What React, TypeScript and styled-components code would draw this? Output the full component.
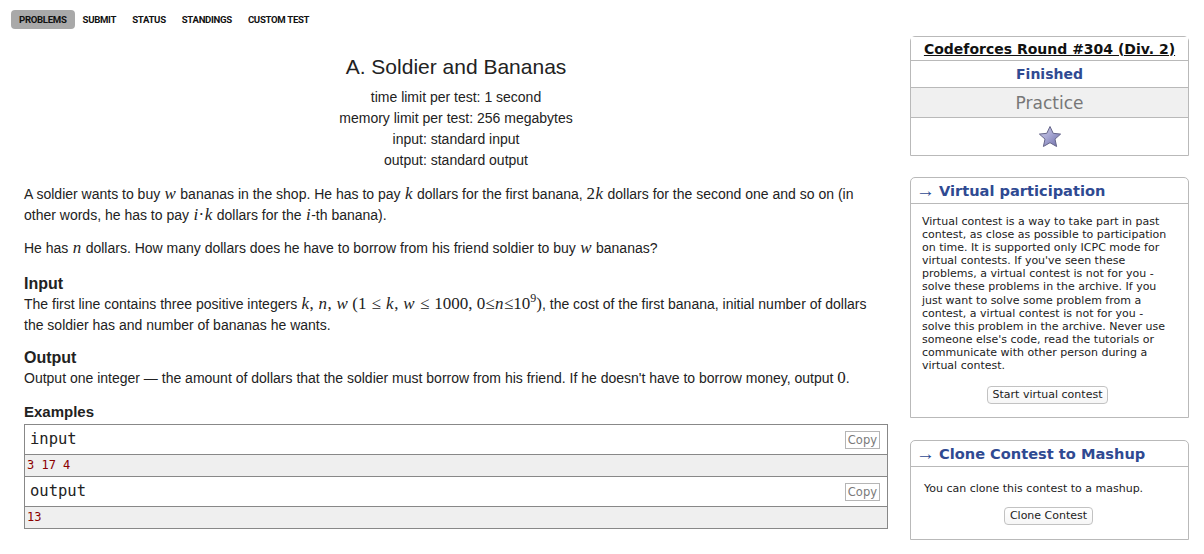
import React from 'react';
import styled, { createGlobalStyle } from 'styled-components';

const Global = createGlobalStyle`
  html, body { margin: 0; padding: 0; background: #fff; }
  body { font-family: "Liberation Sans", Arial, sans-serif; color: #222; }
`;

const Page = styled.div`
  width: 1204px;
  height: 554px;
  overflow: hidden;
  padding-top: 10px;
  box-sizing: border-box;
`;

const Nav = styled.nav`
  display: flex;
  align-items: center;
  margin-left: 11px;
  height: 19px;
`;

const NavItem = styled.a<{ $active?: boolean }>`
  font-family: Roboto, "DejaVu Sans", sans-serif;
  font-weight: bold;
  font-size: 9.6px;
  letter-spacing: -0.3px;
  color: #111;
  padding: 0 8px;
  height: 19px;
  line-height: 19px;
  border-radius: 4px;
  background: ${p => (p.$active ? '#a9a9a9' : 'transparent')};
`;

const Body = styled.div`
  display: flex;
  align-items: flex-start;
  gap: 20px;
  padding-left: 24px;
  margin-top: 7px;
`;

const Main = styled.main`
  width: 866px;
  font-size: 14px;
  line-height: 21px;
  color: #222;
`;

const Title = styled.h1`
  margin: 18px 0 0;
  font-size: 21px;
  line-height: 25px;
  font-weight: normal;
  text-align: center;
  color: #222;
  padding-right: 2px;
`;

const Limits = styled.div`
  margin-top: 8px;
  text-align: center;
  padding-right: 2px;
`;

const Para = styled.p<{ $gap?: number }>`
  margin: ${p => p.$gap ?? 13}px 0 0;
  line-height: 21px;
`;

const SectionTitle = styled.div<{ $size?: number; $gap?: number }>`
  margin-top: ${p => p.$gap ?? 15}px;
  font-weight: bold;
  font-size: ${p => p.$size ?? 16}px;
  line-height: 20px;
  color: #222;
`;

const Mi = styled.span`
  font-family: "Liberation Serif", "Times New Roman", serif;
  font-style: italic;
  font-size: 17px;
  line-height: 1;
  padding: 0 0.5px;
`;

const Mn = styled.span`
  font-family: "Liberation Serif", "Times New Roman", serif;
  font-size: 17px;
  line-height: 1;
`;

const Rel = styled.span`
  font-family: "Liberation Serif", "Times New Roman", serif;
  font-size: 17px;
  line-height: 1;
  margin: 0 1px;
`;

const Sup = styled.sup`
  font-family: "Liberation Serif", "Times New Roman", serif;
  font-size: 12px;
  line-height: 0;
  vertical-align: 7px;
`;

const SampleBox = styled.div`
  margin-top: 2px;
  width: 864px;
  box-sizing: border-box;
  border: 1px solid #888;
`;

const SampleHead = styled.div<{ $first?: boolean }>`
  display: flex;
  align-items: center;
  justify-content: space-between;
  height: 29px;
  padding: 0 7px 0 5px;
  border-top: ${p => (p.$first ? 'none' : '1px solid #888')};
  font-family: "DejaVu Sans Mono", "Liberation Mono", monospace;
  font-size: 15.5px;
  color: #222;
`;

const CopyButton = styled.span`
  font-family: "DejaVu Sans", Verdana, sans-serif;
  font-size: 11.5px;
  line-height: 16px;
  color: #7a7a7a;
  border: 1px solid #b5b5b5;
  padding: 0 2px;
`;

const SampleData = styled.pre`
  margin: 0;
  height: 21px;
  line-height: 21px;
  padding: 0 2px;
  background: #efefef;
  border-top: 1px solid #888;
  font-family: "DejaVu Sans Mono", "Liberation Mono", monospace;
  font-size: 12px;
  color: #8b0000;
`;

const Sidebar = styled.aside`
  width: 279px;
  display: flex;
  flex-direction: column;
  font-family: "DejaVu Sans", Verdana, sans-serif;
`;

const RoundBox = styled.section<{ $mt?: number }>`
  margin-top: ${p => p.$mt ?? 0}px;
  border: 1px solid #b9b9b9;
  border-radius: 5px 5px 0 0;
  box-sizing: border-box;
`;

const InfoRow = styled.div<{ $h: number; $bg?: string; $last?: boolean }>`
  height: ${p => p.$h}px;
  display: flex;
  align-items: center;
  justify-content: center;
  background: ${p => p.$bg ?? '#fff'};
  border-bottom: ${p => (p.$last ? 'none' : '1px solid #b9b9b9')};
`;

const RoundName = styled.a`
  font-weight: bold;
  font-size: 14px;
  color: #111;
  text-decoration: underline;
`;

const Finished = styled.span`
  font-weight: bold;
  font-size: 14px;
  color: #2f4a92;
`;

const Practice = styled.span`
  font-size: 17px;
  color: #777;
`;

const Caption = styled.div`
  height: 25px;
  display: flex;
  align-items: center;
  padding-left: 5px;
  border-bottom: 1px solid #b9b9b9;
  color: #2f4a92;
  font-weight: bold;
  font-size: 14.6px;
`;

const Arrow = styled.span`
  font-family: "Liberation Sans", Arial, sans-serif;
  font-weight: normal;
  font-size: 19px;
  line-height: 1;
  margin-right: 4px;
`;

const BoxBody = styled.div<{ $pl: number; $pt: number; $pb: number }>`
  padding: ${p => p.$pt}px 15px ${p => p.$pb}px ${p => p.$pl}px;
  font-size: 11px;
  line-height: 13.1px;
  color: #222;
`;

const Center = styled.div<{ $mt: number }>`
  margin-top: ${p => p.$mt}px;
  display: flex;
  justify-content: center;
`;

const Button = styled.button`
  font-family: "DejaVu Sans", Verdana, sans-serif;
  font-size: 11px;
  height: 18px;
  padding: 0 5px;
  border: 1px solid #c2c2c2;
  border-radius: 4px;
  background: linear-gradient(#fff, #f6f6f6);
  color: #222;
  line-height: 16px;
`;

const Star = () => (
  <svg width="26" height="24" viewBox="0 0 26 24">
    <defs>
      <linearGradient id="sg" x1="0" y1="0" x2="1" y2="1">
        <stop offset="0" stopColor="#cfcfe8" />
        <stop offset="0.45" stopColor="#a8a8d4" />
        <stop offset="1" stopColor="#6a6aa6" />
      </linearGradient>
    </defs>
    <path
      d="M13 1.5 L16.2 8.3 L23.6 9.1 L18 14.1 L19.6 21.5 L13 17.7 L6.4 21.5 L8 14.1 L2.4 9.1 L9.8 8.3 Z"
      fill="url(#sg)"
      stroke="#66668a"
      strokeWidth="1"
      strokeLinejoin="round"
    />
  </svg>
);

export default function App() {
  return (
    <Page>
      <Global />
      <Nav>
        <NavItem $active>PROBLEMS</NavItem>
        <NavItem>SUBMIT</NavItem>
        <NavItem>STATUS</NavItem>
        <NavItem>STANDINGS</NavItem>
        <NavItem>CUSTOM TEST</NavItem>
      </Nav>
      <Body>
        <Main>
          <Title>A. Soldier and Bananas</Title>
          <Limits>
            <div>time limit per test: 1 second</div>
            <div>memory limit per test: 256 megabytes</div>
            <div>input: standard input</div>
            <div>output: standard output</div>
          </Limits>
          <Para>
            A soldier wants to buy <Mi>w</Mi> bananas in the shop. He has to pay <Mi>k</Mi> dollars for the first
            banana, <Mn>2</Mn><Mi>k</Mi> dollars for the second one and so on (in
            <br />
            other words, he has to pay <Mi>i</Mi><Mn>·</Mn><Mi>k</Mi> dollars for the <Mi>i</Mi>-th banana).
          </Para>
          <Para $gap={12}>
            He has <Mi>n</Mi> dollars. How many dollars does he have to borrow from his friend soldier to buy{' '}
            <Mi>w</Mi> bananas?
          </Para>
          <SectionTitle $gap={15}>Input</SectionTitle>
          <Para $gap={0}>
            The first line contains three positive integers <Mi>k</Mi><Mn>, </Mn><Mi>n</Mi><Mn>, </Mn><Mi>w</Mi>{' '}
            <Mn>(1</Mn>&nbsp;<Rel>≤</Rel>&nbsp;<Mi>k</Mi><Mn>, </Mn><Mi>w</Mi>&nbsp;<Rel>≤</Rel>&nbsp;
            <Mn>1000, 0≤</Mn><Mi>n</Mi><Mn>≤10</Mn>
            <Sup>9</Sup><Mn>)</Mn>, the cost of the first banana, initial number of dollars
            <br />
            the soldier has and number of bananas he wants.
          </Para>
          <SectionTitle $gap={12}>Output</SectionTitle>
          <Para $gap={0}>
            Output one integer — the amount of dollars that the soldier must borrow from his friend. If he doesn't
            have to borrow money, output <Mn>0</Mn>.
          </Para>
          <SectionTitle $size={15} $gap={13}>Examples</SectionTitle>
          <SampleBox>
            <SampleHead $first>
              <span>input</span>
              <CopyButton>Copy</CopyButton>
            </SampleHead>
            <SampleData>3 17 4</SampleData>
            <SampleHead>
              <span>output</span>
              <CopyButton>Copy</CopyButton>
            </SampleHead>
            <SampleData>13</SampleData>
          </SampleBox>
        </Main>
        <Sidebar>
          <RoundBox>
            <InfoRow $h={23}>
              <RoundName>Codeforces Round #304 (Div. 2)</RoundName>
            </InfoRow>
            <InfoRow $h={26}>
              <Finished>Finished</Finished>
            </InfoRow>
            <InfoRow $h={29} $bg="#f0f0f0">
              <Practice>Practice</Practice>
            </InfoRow>
            <InfoRow $h={37} $last>
              <Star />
            </InfoRow>
          </RoundBox>
          <RoundBox $mt={21}>
            <Caption>
              <Arrow>→</Arrow>Virtual participation
            </Caption>
            <BoxBody $pl={11} $pt={11} $pb={13}>
              Virtual contest is a way to take part in past contest, as close as possible to participation on time.
              It is supported only ICPC mode for virtual contests. If you've seen these problems, a virtual contest
              is not for you - solve these problems in the archive. If you just want to solve some problem from a
              contest, a virtual contest is not for you - solve this problem in the archive. Never use someone
              else's code, read the tutorials or communicate with other person during a virtual contest.
              <Center $mt={14}>
                <Button>Start virtual contest</Button>
              </Center>
            </BoxBody>
          </RoundBox>
          <RoundBox $mt={22}>
            <Caption>
              <Arrow>→</Arrow>Clone Contest to Mashup
            </Caption>
            <BoxBody $pl={13} $pt={15} $pb={14}>
              You can clone this contest to a mashup.
              <Center $mt={12}>
                <Button>Clone Contest</Button>
              </Center>
            </BoxBody>
          </RoundBox>
        </Sidebar>
      </Body>
    </Page>
  );
}
